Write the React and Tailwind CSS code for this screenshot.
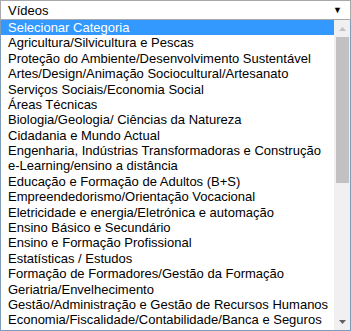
import React from "react";

const items = [
  "Agricultura/Silvicultura e Pescas",
  "Proteção do Ambiente/Desenvolvimento Sustentável",
  "Artes/Design/Animação Sociocultural/Artesanato",
  "Serviços Sociais/Economia Social",
  "Áreas Técnicas",
  "Biologia/Geologia/ Ciências da Natureza",
  "Cidadania e Mundo Actual",
  "Engenharia, Indústrias Transformadoras e Construção",
  "e-Learning/ensino a distância",
  "Educação e Formação de Adultos (B+S)",
  "Empreendedorismo/Orientação Vocacional",
  "Eletricidade e energia/Eletrónica e automação",
  "Ensino Básico e Secundário",
  "Ensino e Formação Profissional",
  "Estatísticas / Estudos",
  "Formação de Formadores/Gestão da Formação",
  "Geriatria/Envelhecimento",
  "Gestão/Administração e Gestão de Recursos Humanos",
  "Economia/Fiscalidade/Contabilidade/Banca e Seguros",
];

export default function App() {
  return (
    <div
      className="w-[351px] h-[331px] bg-white overflow-hidden flex flex-col text-[13px] text-black"
      style={{ fontFamily: '"Liberation Sans", Arial, sans-serif' }}
    >
      <div className="h-[20px] shrink-0 flex items-center justify-between border border-[#a9a9a9] pl-[7px] pr-[8px] bg-white">
        <span className="leading-none">Vídeos</span>
        <span className="text-[9px] leading-none">▼</span>
      </div>
      <div className="flex-1 flex border border-[#7f9db9] border-t-0 min-h-0">
        <div className="flex-1 flex flex-col min-w-0 pt-[0px]">
          <div className="h-[15.4px] shrink-0 bg-[#3399ff] text-white pl-[7px] flex items-center whitespace-nowrap">
            Selecionar Categoria
          </div>
          {items.map((t) => (
            <div
              key={t}
              className="h-[15.4px] shrink-0 pl-[7px] flex items-center whitespace-nowrap"
            >
              {t}
            </div>
          ))}
        </div>
        <div className="w-[16px] shrink-0 bg-[#f0f0f0] flex flex-col items-center">
          <div className="h-[17px] w-full flex items-center justify-center">
            <svg width="7" height="4" viewBox="0 0 7 4">
              <path d="M0 4 L3.5 0 L7 4 Z" fill="#c2c2c2" />
            </svg>
          </div>
          <div className="w-[13px] h-[146px] bg-[#c1c1c1]" />
          <div className="flex-1" />
          <div className="h-[17px] w-full flex items-center justify-center">
            <svg width="7" height="4" viewBox="0 0 7 4">
              <path d="M0 0 L7 0 L3.5 4 Z" fill="#606060" />
            </svg>
          </div>
        </div>
      </div>
    </div>
  );
}
